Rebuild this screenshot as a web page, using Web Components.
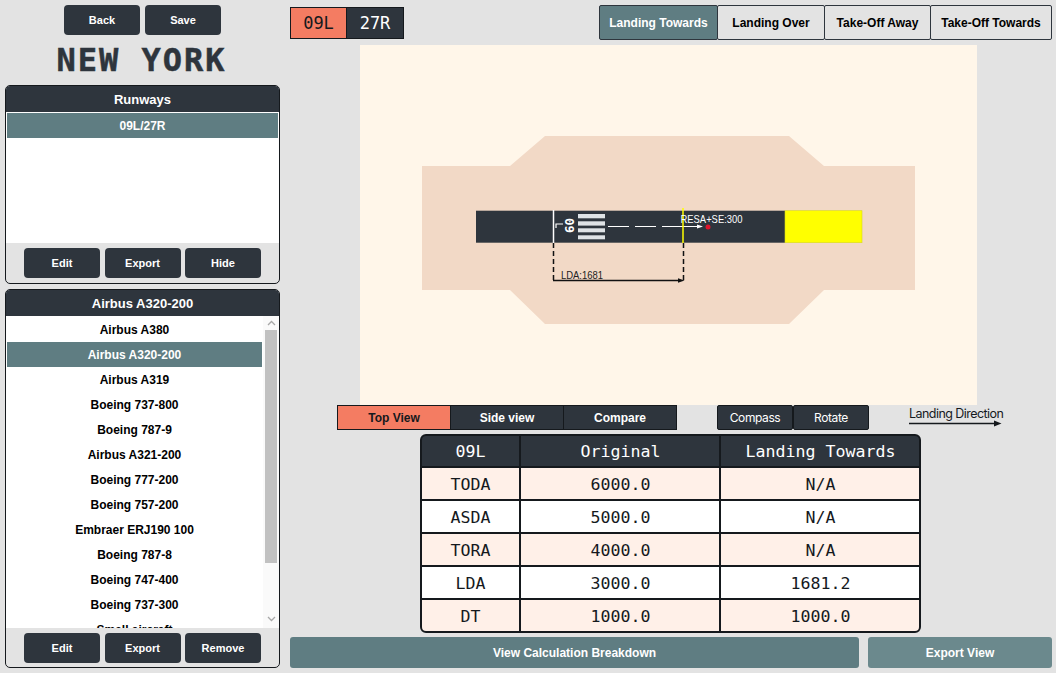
<!DOCTYPE html>
<html>
<head>
<meta charset="utf-8">
<title>Runway view</title>
<style>
  html, body { margin: 0; height: 100%; }
  body { background: #e3e3e3; font-family: "Liberation Sans", Arial, sans-serif; overflow: hidden; }
</style>
</head>
<body>
<app-shell>
  <side-bar slot="side">
    <dark-btn slot="actions" style="width:76px">Back</dark-btn>
    <dark-btn slot="actions" style="width:76px">Save</dark-btn>
    <span slot="title">NEW YORK</span>

    <list-panel slot="panels" heading="Runways" style="height:199px" list-height="131">
      <list-row selected>09L/27R</list-row>
      <dark-btn slot="footer">Edit</dark-btn>
      <dark-btn slot="footer">Export</dark-btn>
      <dark-btn slot="footer">Hide</dark-btn>
    </list-panel>

    <list-panel slot="panels" heading="Airbus A320-200" style="height:379px" list-height="312" scroll>
      <list-row>Airbus A380</list-row>
      <list-row selected>Airbus A320-200</list-row>
      <list-row>Airbus A319</list-row>
      <list-row>Boeing 737-800</list-row>
      <list-row>Boeing 787-9</list-row>
      <list-row>Airbus A321-200</list-row>
      <list-row>Boeing 777-200</list-row>
      <list-row>Boeing 757-200</list-row>
      <list-row>Embraer ERJ190 100</list-row>
      <list-row>Boeing 787-8</list-row>
      <list-row>Boeing 747-400</list-row>
      <list-row>Boeing 737-300</list-row>
      <list-row>Small aircraft</list-row>
      <dark-btn slot="footer">Edit</dark-btn>
      <dark-btn slot="footer">Export</dark-btn>
      <dark-btn slot="footer">Remove</dark-btn>
    </list-panel>
  </side-bar>

  <top-bar slot="main"></top-bar>
  <runway-canvas slot="main"></runway-canvas>
  <view-bar slot="main"></view-bar>
  <distance-table slot="main"></distance-table>
  <bottom-bar slot="main"></bottom-bar>
</app-shell>

<script>
class AppShell extends HTMLElement {
  constructor() {
    super()
    this.attachShadow({mode: 'open'}).innerHTML = `
      <style>
        :host { display: flex; width: 1056px; height: 673px; box-sizing: border-box; }
        .side { width: 285px; flex: none; }
        .main { flex: 1; display: flex; flex-direction: column; padding-left: 5px; padding-right: 4px; min-width: 0; }
      </style>
      <div class="side"><slot name="side"></slot></div>
      <div class="main"><slot name="main"></slot></div>
    `
  }
}
customElements.define('app-shell', AppShell)

class DarkBtn extends HTMLElement {
  constructor() {
    super()
    this.attachShadow({mode: 'open'}).innerHTML = `
      <style>
        :host {
          display: flex; align-items: center; justify-content: center;
          box-sizing: border-box; height: 30px;
          background: #2e353d; color: #fff; border-radius: 4px;
          font: bold 11px "Liberation Sans", Arial, sans-serif;
        }
      </style>
      <slot></slot>
    `
  }
}
customElements.define('dark-btn', DarkBtn)

class SideBar extends HTMLElement {
  constructor() {
    super()
    this.attachShadow({mode: 'open'}).innerHTML = `
      <style>
        :host { display: block; padding: 5px 0 0 5px; box-sizing: border-box; }
        .actions { display: flex; justify-content: center; gap: 5px; padding-right: 5px; }
        .title {
          height: 50px; display: flex; align-items: center; justify-content: center;
          padding-right: 7px; box-sizing: border-box;
          font: bold 32px "DejaVu Sans Mono", monospace; letter-spacing: 2px; color: #2e353d;
          -webkit-text-stroke: 0.5px #2e353d;
          white-space: pre;
        }
        .panels { display: flex; flex-direction: column; gap: 5px; width: 275px; }
      </style>
      <div class="actions"><slot name="actions"></slot></div>
      <div class="title"><slot name="title"></slot></div>
      <div class="panels"><slot name="panels"></slot></div>
    `
  }
}
customElements.define('side-bar', SideBar)

class ListPanel extends HTMLElement {
  constructor() {
    super()
    const scroll = this.hasAttribute('scroll')
    const listHeight = this.getAttribute('list-height')
    this.attachShadow({mode: 'open'}).innerHTML = `
      <style>
        :host {
          display: flex; flex-direction: column; box-sizing: border-box;
          border: 1px solid #15191d; border-radius: 5px; overflow: hidden; background: #e3e3e3;
        }
        header {
          height: 26px; flex: none; background: #2e353d; color: #fff;
          display: flex; align-items: center; justify-content: center;
          font: bold 13px "Liberation Sans", Arial, sans-serif;
        }
        .body { display: flex; height: ${listHeight}px; flex: none; background: #fff; }
        .list { flex: 1; overflow: hidden; padding: 1px 1px 0; min-width: 0; }
        .bar { width: 16px; flex: none; background: #fafafa; display: flex; flex-direction: column; align-items: center; }
        .bar svg { flex: none; display: block; margin-top: 4px; }
        .track { height: 233px; width: 12px; margin-top: 4px; background: #c1c1c1; flex: none; }
        .bar svg.down { margin-top: auto; margin-bottom: 6px; }
        footer {
          flex: 1; display: grid; grid-template-columns: 76px 76px 76px; column-gap: 4.5px;
          justify-content: center; align-items: center;
        }
      </style>
      <header>${this.getAttribute('heading')}</header>
      <div class="body">
        <div class="list"><slot></slot></div>
        ${scroll ? `<div class="bar">
          <svg width="9" height="6" viewBox="0 0 9 6"><path d="M1 5 L4.5 1.5 L8 5" fill="none" stroke="#a8a8a8" stroke-width="1.3"/></svg>
          <div class="track"></div>
          <svg class="down" width="9" height="6" viewBox="0 0 9 6"><path d="M1 1 L4.5 4.5 L8 1" fill="none" stroke="#a8a8a8" stroke-width="1.3"/></svg>
        </div>` : ''}
      </div>
      <footer><slot name="footer"></slot></footer>
    `
  }
}
customElements.define('list-panel', ListPanel)

class ListRow extends HTMLElement {
  constructor() {
    super()
    this.attachShadow({mode: 'open'}).innerHTML = `
      <style>
        :host {
          display: flex; align-items: center; justify-content: center; height: 25px;
          font: bold 12px "Liberation Sans", Arial, sans-serif; color: #000;
        }
        :host([selected]) { background: #5f7d82; color: #fff; }
      </style>
      <slot></slot>
    `
  }
}
customElements.define('list-row', ListRow)

class TopBar extends HTMLElement {
  constructor() {
    super()
    const tabs = [['Landing Towards', 119, 1], ['Landing Over', 108], ['Take-Off Away', 107], ['Take-Off Towards', 122]]
    this.attachShadow({mode: 'open'}).innerHTML = `
      <style>
        :host { display: flex; justify-content: space-between; align-items: flex-start; height: 40px; padding-top: 5px; box-sizing: border-box; }
        .ends { display: flex; margin-top: 2px; border: 1px solid #15191d; height: 32px; box-sizing: border-box; }
        .ends div {
          box-sizing: border-box; width: 56px; display: flex; align-items: center; justify-content: center;
          font: 17px "DejaVu Sans Mono", monospace; background: #2e353d; color: #fff;
        }
        .ends div.on { background: #f47c62; color: #15191d; border-right: 1px solid #15191d; }
        .tabs { display: flex; height: 35px; }
        .tabs div {
          box-sizing: border-box; display: flex; align-items: center; justify-content: center;
          border: 1px solid #2e353d; margin-left: -1px; border-radius: 2px;
          font: bold 12px "Liberation Sans", Arial, sans-serif; color: #000; background: #e3e3e3;
        }
        .tabs div.on { background: #5f7d82; color: #fff; }
      </style>
      <div class="ends"><div class="on">09L</div><div>27R</div></div>
      <div class="tabs">${tabs.map(t => `<div class="${t[2] ? 'on' : ''}" style="width:${t[1]}px">${t[0]}</div>`).join('')}</div>
    `
  }
}
customElements.define('top-bar', TopBar)

class RunwayCanvas extends HTMLElement {
  constructor() {
    super()
    // drawn in page coordinates minus the canvas origin (360,45)
    this.attachShadow({mode: 'open'}).innerHTML = `
      <style>
        :host { display: block; width: 617px; height: 360px; margin: 5px 0 0 70px; flex: none; background: #fff6e9; }
        svg { display: block; }
        text { font-family: "Liberation Sans", Arial, sans-serif; }
      </style>
      <svg width="617" height="360" viewBox="360 45 617 360">
        <polygon fill="#f2d9c6" points="422,166 510,166 545,136 789,136 824,166 915,166 915,290 824,290 789,324 545,324 510,290 422,290"/>
        <rect x="476" y="210.700" width="309" height="32" fill="#2e353d"/>
        <rect x="785" y="210.700" width="77" height="32" fill="#ffff00" stroke="#d8d820" stroke-width="0.6"/>
        <path d="M553.500 210V243" stroke="#fff" stroke-width="1.5"/>
        <path d="M556 228V224H563" fill="none" stroke="#fff" stroke-width="1.2"/>
        <text transform="translate(565,218) rotate(90)" font-size="12.500" font-weight="bold" fill="#fff" style="font-family:'DejaVu Sans Mono',monospace">09</text>
        <g fill="#dfe3e6">
          <rect x="578" y="214" width="27" height="4.300"/>
          <rect x="578" y="221.300" width="27" height="4.300"/>
          <rect x="578" y="228.300" width="27" height="4"/>
          <rect x="578" y="235.300" width="27" height="4"/>
        </g>
        <path d="M608 226.500H629M635 226.500H656M662 226.500H699" stroke="#fff" stroke-width="1.2"/>
        <path d="M697 224.500L703 226.500L697 228.500Z" fill="#fff"/>
        <path d="M683 208V243" stroke="#ffff00" stroke-width="1.5"/>
        <circle cx="708" cy="227" r="2.500" fill="#e0142c"/>
        <text x="680.500" y="223" font-size="11" textLength="62" lengthAdjust="spacingAndGlyphs" fill="#fff">RESA+SE:300</text>
        <path d="M553.500 243V281M683.500 243V281" stroke="#111" stroke-width="1.5" stroke-dasharray="5 3"/>
        <path d="M553 280.500H679" stroke="#111" stroke-width="1.500"/>
        <path d="M678 278.300L684.500 280.500L678 282.700Z" fill="#111"/>
        <text x="561" y="279" font-size="10" textLength="42" lengthAdjust="spacingAndGlyphs" fill="#222">LDA:1681</text>
      </svg>
    `
  }
}
customElements.define('runway-canvas', RunwayCanvas)

class ViewBar extends HTMLElement {
  constructor() {
    super()
    this.attachShadow({mode: 'open'}).innerHTML = `
      <style>
        :host { display: flex; height: 29px; padding-left: 47px; flex: none; position: relative; }
        .group { display: flex; height: 25px; }
        .views div, .tools div {
          box-sizing: border-box; display: flex; align-items: center; justify-content: center;
          background: #2e353d; color: #fff; border: 1px solid #15191d;
        }
        .views div { width: 114px; margin-right: -1px; font: bold 12px "Liberation Sans", Arial, sans-serif; }
        .views div.on { background: #f47c62; color: #15191d; }
        .tools { margin-left: 41px; }
        .tools div { width: 76px; font: 12px Inter, "Liberation Sans", sans-serif; letter-spacing: -0.4px; border-radius: 2px; }
        .dir { margin-left: 40px; width: 92px; color: #15191d; position: relative; height: 25px; }
        .dir span { display: block; font: 12.500px Inter, "Liberation Sans", sans-serif; letter-spacing: -0.55px; white-space: nowrap; line-height: 16px; margin-top: 1px; }
        .dir svg { display: block; margin-top: -2px; }
      </style>
      <div class="group views"><div class="on">Top View</div><div>Side view</div><div>Compare</div></div>
      <div class="group tools"><div>Compass</div><div>Rotate</div></div>
      <div class="dir">
        <span>Landing Direction</span>
        <svg width="93" height="7" viewBox="0 0 93 7"><path d="M0 3.500H86" stroke="#15191d" stroke-width="1.500"/><path d="M85 0.500L92.500 3.500L85 6.500Z" fill="#15191d"/></svg>
      </div>
    `
  }
}
customElements.define('view-bar', ViewBar)

class DistanceTable extends HTMLElement {
  constructor() {
    super()
    const rows = [
      ['TODA', '6000.0', 'N/A'],
      ['ASDA', '5000.0', 'N/A'],
      ['TORA', '4000.0', 'N/A'],
      ['LDA', '3000.0', '1681.2'],
      ['DT', '1000.0', '1000.0']
    ]
    this.attachShadow({mode: 'open'}).innerHTML = `
      <style>
        :host {
          display: grid; grid-template-columns: 97px 198px 198px; grid-template-rows: 30px repeat(5, 31px); gap: 2px;
          box-sizing: border-box; width: 501px; height: 199px; margin-left: 130px; flex: none;
          background: #15191d; border: 2px solid #15191d; border-radius: 6px; overflow: hidden;
          font: 16.600px "DejaVu Sans Mono", monospace; color: #15191d;
        }
        div { display: flex; align-items: center; justify-content: center; background: #fff; padding-top: 1px; }
        div:not(:nth-child(3n+2)) { padding-left: 1px; }
        .head { background: #2e353d; color: #fff; padding-top: 0; }
        .odd { background: #fff0e8; }
      </style>
      ${['09L', 'Original', 'Landing Towards'].map(t => `<div class="head">${t}</div>`).join('')}
      ${rows.map((r, i) => r.map(c => `<div class="${i % 2 ? '' : 'odd'}">${c}</div>`).join('')).join('')}
    `
  }
}
customElements.define('distance-table', DistanceTable)

class BottomBar extends HTMLElement {
  constructor() {
    super()
    this.attachShadow({mode: 'open'}).innerHTML = `
      <style>
        :host { display: flex; gap: 9px; margin-top: 4px; height: 31px; flex: none; }
        div {
          display: flex; align-items: center; justify-content: center; color: #fff; border-radius: 3px;
          font: bold 12px "Liberation Sans", Arial, sans-serif;
        }
        .a { width: 569px; background: #5f7d82; }
        .b { width: 184px; background: #6b898d; }
      </style>
      <div class="a">View Calculation Breakdown</div>
      <div class="b">Export View</div>
    `
  }
}
customElements.define('bottom-bar', BottomBar)
</script>
</body>
</html>
